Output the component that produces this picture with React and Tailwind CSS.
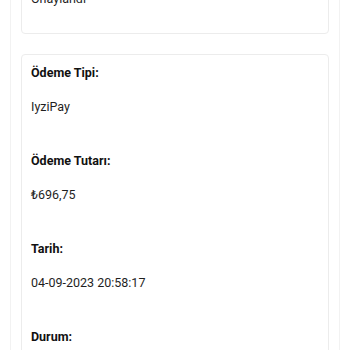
// @ts-nocheck
const fields = [
  { label: "Ödeme Tipi:", value: "IyziPay" },
  { label: "Ödeme Tutarı:", value: "₺696,75" },
  { label: "Tarih:", value: "04-09-2023 20:58:17" },
  { label: "Durum:", value: "Onaylandı" },
];

export default function App() {
  return (
    <div className="h-[350px] overflow-hidden bg-white font-['Roboto',sans-serif]">
      <div className="mx-[10px] mt-[-32px] border-x border-[#f2f2f2] px-[10px]">
        {/* ---------- previous card (cut off) ---------- */}
        <div className="rounded-sm border border-[#ececec] px-[9px] pt-[22px] pb-[26px]">
          <p className="text-[12.5px] leading-[16px] text-[#1f1f1f]">Onaylandı</p>
        </div>

        {/* ---------- detail card ---------- */}
        <div className="mt-[20px] rounded-sm border border-[#ececec] px-[9px] pt-[10px]">
          {fields.map((f) => (
            <div key={f.label} className="mb-[38px]">
              <p className="text-[12.5px] font-bold leading-[16px] text-[#111]">{f.label}</p>
              <p className="mt-[18px] text-[12.5px] leading-[16px] text-[#1f1f1f]">{f.value}</p>
            </div>
          ))}
        </div>
      </div>
    </div>
  );
}
